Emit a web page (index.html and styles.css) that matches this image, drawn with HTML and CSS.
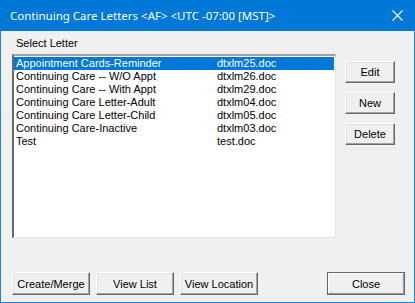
FILE: index.html
```html
<!DOCTYPE html>
<html>
<head>
  <title>Continuing Care Letters</title>
  <link rel="stylesheet" href="styles.css">
</head>
<body>
  <div class="window">
    <div class="titlebar">
      <span class="title">Continuing Care Letters &lt;AF&gt; &lt;UTC -07:00 [MST]&gt;</span>
      <svg class="close-x" width="11" height="11" viewBox="0 0 11 11">
        <path d="M0.5 0.5 L10.5 10.5 M10.5 0.5 L0.5 10.5" stroke="#fff" stroke-width="1.1" fill="none"/>
      </svg>
    </div>
    <div class="content">
      <div class="label">Select Letter</div>
      <div class="main">
        <div class="listbox">
          <div class="row selected"><span class="name">Appointment Cards-Reminder</span><span class="file">dtxlm25.doc</span></div>
          <div class="row"><span class="name">Continuing Care -- W/O Appt</span><span class="file">dtxlm26.doc</span></div>
          <div class="row"><span class="name">Continuing Care -- With Appt</span><span class="file">dtxlm29.doc</span></div>
          <div class="row"><span class="name">Continuing Care Letter-Adult</span><span class="file">dtxlm04.doc</span></div>
          <div class="row"><span class="name">Continuing Care Letter-Child</span><span class="file">dtxlm05.doc</span></div>
          <div class="row"><span class="name">Continuing Care-Inactive</span><span class="file">dtxlm03.doc</span></div>
          <div class="row"><span class="name">Test</span><span class="file">test.doc</span></div>
        </div>
        <div class="side">
          <button class="btn small">Edit</button>
          <button class="btn small">New</button>
          <button class="btn small">Delete</button>
        </div>
      </div>
      <div class="bottom">
        <button class="btn wide">Create/Merge</button>
        <button class="btn wide">View List</button>
        <button class="btn wide">View Location</button>
        <button class="btn wide default">Close</button>
      </div>
    </div>
  </div>
</body>
</html>
```

FILE: styles.css
```css
body {
  margin: 0;
  background: #f0f0f0;
}
.window {
  width: 415px;
  height: 303px;
  box-sizing: border-box;
  border: 1px solid #1883d7;
  border-top: none;
  display: flex;
  flex-direction: column;
  font-family: "Liberation Sans", Arial, sans-serif;
  font-size: 11px;
}
.titlebar {
  height: 31px;
  margin: 0 -1px;
  background: #0078d7;
  color: #fff;
  display: flex;
  align-items: center;
  padding: 0 12px 0 10px;
  font-family: "Noto Sans", sans-serif;
  font-size: 11.5px;
}
.title {
  flex: 1;
  margin-top: -1px;
}
.close-x {
  display: block;
}
.content {
  flex: 1;
  background: #f0f0f0;
  padding: 6px 9px 0 11px;
  display: flex;
  flex-direction: column;
}
.label {
  height: 13px;
  line-height: 13px;
  margin-left: 4px;
  margin-bottom: 4px;
}
.main {
  display: flex;
}
.listbox {
  width: 324px;
  height: 184px;
  box-sizing: border-box;
  background: #fff;
  border-style: solid;
  border-width: 2px 1px 1px 2px;
  border-color: #a0a0a0 #e3e3e3 #e3e3e3 #696969;
  box-shadow: inset 0 1px 0 #fff;
  padding-top: 1px;
}
.listbox .row {
  display: flex;
  height: 13px;
  line-height: 13px;
  padding-left: 2px;
  margin-right: 1px;
}
.listbox .row.selected {
  background: #0078d7;
  color: #fff;
}
.row .name {
  width: 201px;
}
.side {
  display: flex;
  flex-direction: column;
  gap: 9px;
  margin-left: 9px;
  padding-top: 7px;
}
.btn {
  box-sizing: border-box;
  height: 22px;
  padding: 0;
  background: #f0f0f0;
  font-family: "Liberation Sans", Arial, sans-serif;
  font-size: 11px;
  color: #000;
  border: 1px solid;
  border-color: #fff #696969 #696969 #fff;
  box-shadow: inset -1px -1px 0 #a0a0a0, inset 1px 1px 0 #e3e3e3;
}
.btn.small {
  width: 50px;
}
.bottom {
  display: flex;
  gap: 6px;
  margin-top: 34px;
}
.btn.wide {
  width: 78px;
  height: 23px;
}
.btn.default {
  margin-left: auto;
  border: 1px solid #646464;
  box-shadow: inset -1px -1px 0 #a0a0a0, inset 1px 1px 0 #fff, inset -2px -2px 0 #e3e3e3;
}
```
